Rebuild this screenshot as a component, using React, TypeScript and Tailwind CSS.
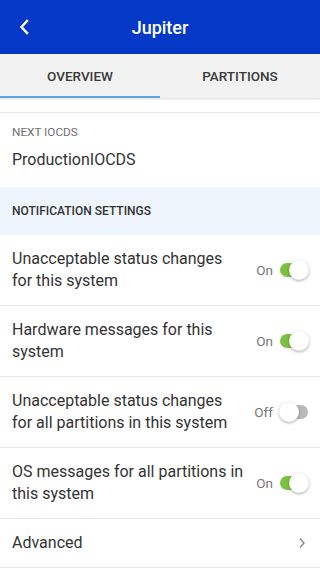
import React, { useState } from 'react';

const ROWS = [
  { id: 'r1', label: 'Unacceptable status changes for this system', on: true },
  { id: 'r2', label: 'Hardware messages for this system', on: true },
  { id: 'r3', label: 'Unacceptable status changes for all partitions in this system', on: false },
  { id: 'r4', label: 'OS messages for all partitions in this system', on: true },
];

function Toggle({ on, onClick }: { on: boolean; onClick: () => void }) {
  return (
    <button type="button" onClick={onClick} className="relative w-[28px] h-[20px] flex items-center">
      <span className={`block w-[28px] h-[14px] rounded-full ${on ? 'bg-[#7cc242]' : 'bg-[#b9b9b9]'}`} />
      <span
        className={`absolute top-0 w-[20px] h-[20px] rounded-full bg-white shadow-[0_1px_3px_rgba(0,0,0,0.35)] ${on ? 'left-[9px]' : 'left-[-1px]'}`}
      />
    </button>
  );
}

export default function App() {
  const [tab, setTab] = useState('overview');
  const [values, setValues] = useState<Record<string, boolean>>(
    Object.fromEntries(ROWS.map(r => [r.id, r.on]))
  );

  return (
    <div className="w-[320px] h-[568px] overflow-hidden bg-white text-[#333] font-['Roboto',sans-serif]">
      {/* Header */}
      <div className="relative h-[54px] bg-[#0339c6] flex items-center justify-center">
        <button type="button" className="absolute left-[16px] top-[17px] w-[16px] h-[20px] flex items-center justify-center">
          <svg width="10" height="16" viewBox="0 0 10 16" fill="none">
            <path d="M8 2L2.5 8L8 14" stroke="white" strokeWidth="2.4" strokeLinecap="square" />
          </svg>
        </button>
        <h1 className="text-white text-[18px] font-medium">Jupiter</h1>
      </div>

      {/* Tabs */}
      <div className="relative flex h-[44px] bg-[#f2f2f2] shadow-[0_1px_2px_rgba(0,0,0,0.15)]">
        {[
          { id: 'overview', label: 'OVERVIEW' },
          { id: 'partitions', label: 'PARTITIONS' },
        ].map(t => (
          <button
            key={t.id}
            type="button"
            onClick={() => setTab(t.id)}
            className={`flex-1 flex items-center justify-center text-[13.5px] font-medium text-[#3a3a3a] border-b-2 pt-[2px] ${
              tab === t.id ? 'border-[#5ea5df]' : 'border-transparent'
            }`}
          >
            {t.label}
          </button>
        ))}
      </div>

      <div className="h-[15px] border-b border-[#e6e6e6]" />

      {/* Next IOCDS */}
      <div className="h-[74px] px-[12px] pt-[11px]">
        <p className="text-[11.75px] leading-[16px] text-[#6f6f6f]">NEXT IOCDS</p>
        <p className="text-[16px] leading-[22px] mt-[9px] text-[#333]">ProductionIOCDS</p>
      </div>

      {/* Section header */}
      <div className="h-[48px] bg-[#eef5fd] px-[12px] flex items-center">
        <p className="text-[12px] font-medium text-[#333]">NOTIFICATION SETTINGS</p>
      </div>

      {/* Toggle rows */}
      {ROWS.map(r => (
        <div key={r.id} className="h-[71px] border-b border-[#e6e6e6] flex items-center pl-[12px] pr-[12px]">
          <p className="w-[232px] text-[16px] leading-[22px] text-[#333]">{r.label}</p>
          <div className="ml-auto flex items-center gap-[7px]">
            <span className="text-[13.5px] text-[#777]">{values[r.id] ? 'On' : 'Off'}</span>
            <Toggle on={values[r.id]} onClick={() => setValues(prev => ({ ...prev, [r.id]: !prev[r.id] }))} />
          </div>
        </div>
      ))}

      {/* Advanced */}
      <div className="h-[49px] border-b border-[#e6e6e6] flex items-center px-[12px]">
        <p className="flex-1 text-[16px] text-[#333]">Advanced</p>
        <svg width="8" height="12" viewBox="0 0 8 12" fill="none" className="mr-[2px]">
          <path d="M2 1.5L6 6L2 10.5" stroke="#888" strokeWidth="1.4" />
        </svg>
      </div>
    </div>
  );
}
